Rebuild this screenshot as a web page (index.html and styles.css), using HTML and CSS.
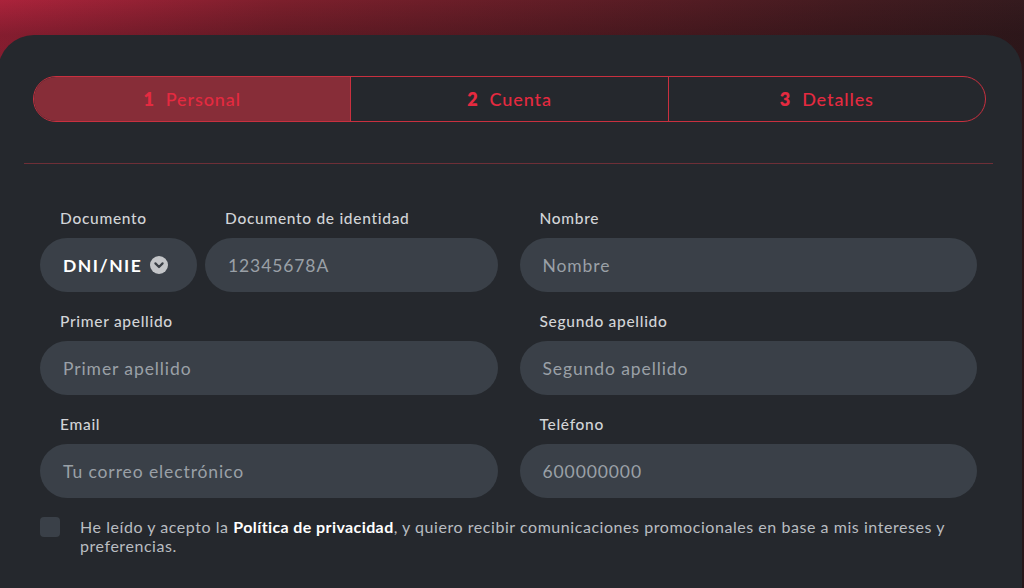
FILE: index.html
```html
<!DOCTYPE html>
<html lang="es">
<head>
<meta charset="utf-8">
<title>Registro</title>
<link rel="stylesheet" href="styles.css">
</head>
<body>
<div class="card">
  <div class="steps">
    <div class="step active"><b>1</b>Personal</div>
    <div class="step"><b>2</b>Cuenta</div>
    <div class="step"><b>3</b>Detalles</div>
  </div>
  <div class="divider"></div>
  <div class="form">
    <div class="row">
      <div class="col col-doc">
        <div class="field field-select">
          <label class="lbl">Documento</label>
          <div class="select"><span>DNI/NIE</span>
            <svg class="chev" width="18" height="18" viewBox="0 0 18 18"><circle cx="9" cy="9" r="9" fill="#c3c5c8"/><path d="M5.4 7.4 9 11 12.6 7.4" fill="none" stroke="#3a3f46" stroke-width="2.2" stroke-linecap="round" stroke-linejoin="round"/></svg>
          </div>
        </div>
        <div class="field grow">
          <label class="lbl">Documento de identidad</label>
          <div class="input">12345678A</div>
        </div>
      </div>
      <div class="col">
        <div class="field grow">
          <label class="lbl">Nombre</label>
          <div class="input">Nombre</div>
        </div>
      </div>
    </div>
    <div class="row">
      <div class="col"><div class="field grow"><label class="lbl">Primer apellido</label><div class="input">Primer apellido</div></div></div>
      <div class="col"><div class="field grow"><label class="lbl">Segundo apellido</label><div class="input">Segundo apellido</div></div></div>
    </div>
    <div class="row">
      <div class="col"><div class="field grow"><label class="lbl">Email</label><div class="input">Tu correo electrónico</div></div></div>
      <div class="col"><div class="field grow"><label class="lbl">Teléfono</label><div class="input">600000000</div></div></div>
    </div>
    <div class="consent">
      <span class="box"></span>
      <p><span>He leído y acepto la </span><strong>Política de privacidad</strong><span>, y quiero recibir comunicaciones promocionales en base a mis intereses y</span> <span>preferencias.</span></p>
    </div>
  </div>
</div>
</body>
</html>
```

FILE: styles.css
```css
* { box-sizing: border-box; }
html, body { margin: 0; height: 100%; }
body {
  width: 1024px;
  height: 588px;
  overflow: hidden;
  font-family: "Lato", "Noto Sans", sans-serif;
  background:
    linear-gradient(180deg, rgba(0,0,0,0) 0px, rgba(20,10,12,0.25) 35px),
    linear-gradient(100deg, #ab233b 0%, #7c1f2c 25%, #601d26 50%, #431b20 75%, #2c1a1d 100%);
}
.card {
  margin-top: 35px;
  margin-left: -2px;
  width: 1024px;
  height: 553px;
  background: #25282d;
  border-radius: 36px 36px 0 0;
  padding: 41px 36px 0 35px;
}
.steps {
  display: flex;
  height: 46px;
  border: 1.5px solid #c9303f;
  border-radius: 23px;
  overflow: hidden;
}
.step {
  flex: 1;
  display: flex;
  align-items: center;
  justify-content: center;
  color: #e52a40;
  font-size: 18px;
  font-weight: 500;
  letter-spacing: 0.9px;
}
.step + .step { border-left: 1.5px solid #c9303f; }
.step b { font-weight: 800; margin-right: 11px; }
.step.active { background: #872d38; }
.divider {
  height: 1px;
  background: #6e2f37;
  margin: 41px -7px 0 -9px;
}
.form { padding: 44px 9px 0 7px; }
.row {
  display: flex;
  gap: 22px;
  margin-bottom: 19px;
}
.col { flex: 1; display: flex; gap: 8px; }
.field { display: flex; flex-direction: column; gap: 10px; }
.grow { flex: 1; }
.field-select { width: 157px; flex: none; }
.lbl {
  height: 20px;
  line-height: 20px;
  padding-left: 20px;
  color: #d2d4d7;
  font-size: 15.5px;
  font-weight: 500;
  letter-spacing: 0.7px;
  white-space: nowrap;
}
.input, .select {
  height: 54px;
  border-radius: 27px;
  background: #3a4048;
  display: flex;
  align-items: center;
  padding-left: 23px;
  color: #9aa0a7;
  font-size: 17.5px;
  letter-spacing: 0.9px;
}
.select {
  color: #ffffff;
  font-weight: 700;
  font-size: 17.5px;
  letter-spacing: 1.5px;
  gap: 8px;
}
.chev { flex: none; }
.consent {
  display: flex;
  gap: 20px;
  align-items: flex-start;
  margin-top: 2px;
}
.box {
  width: 20px;
  height: 20px;
  border-radius: 4px;
  background: #3a4048;
  flex: none;
}
.consent p {
  margin: 0;
  color: #b9bdc1;
  font-size: 16px;
  line-height: 19px;
  letter-spacing: 0.55px;
  max-width: 880px;
}
.consent strong { color: #ffffff; font-weight: 700; letter-spacing: 0.4px; }
```
